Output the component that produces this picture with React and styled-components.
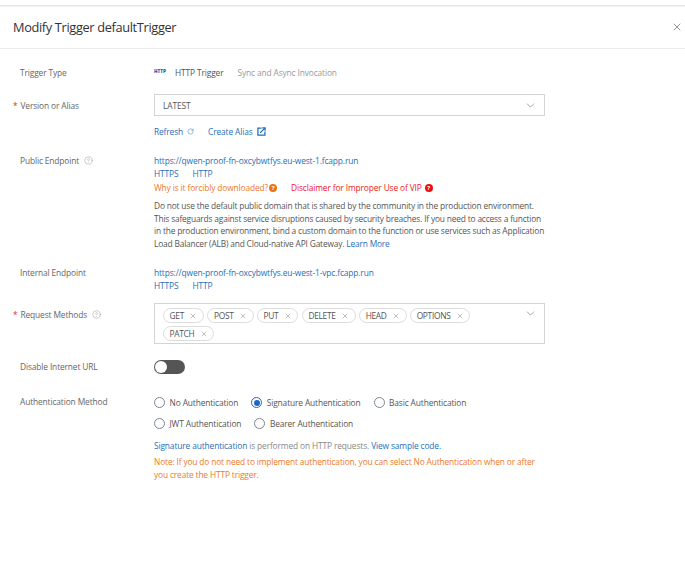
import React from "react";
import styled, { createGlobalStyle } from "styled-components";
import { X, ChevronDown, RotateCw, CircleHelp } from "lucide-react";

const Global = createGlobalStyle`
  html, body { margin: 0; padding: 0; background: #fff; }
  body { font-family: "Open Sans", "Noto Sans", sans-serif; font-size: 8.4px; letter-spacing: -0.13px; color: #555; }
`;

const Page = styled.div`
  width: 685px;
  height: 573px;
  overflow: hidden;
  padding-top: 5px;
  box-sizing: border-box;
`;

const Header = styled.header`
  height: 42px;
  border-top: 1px solid #e6e6e6;
  border-bottom: 1px solid #ececec;
  display: flex;
  align-items: center;
  justify-content: space-between;
  padding: 0 2px 0 13px;
  box-shadow: inset 0 1px 1px #f4f4f4;
`;

const Title = styled.h1`
  margin: 0;
  font-size: 12.8px;
  letter-spacing: -0.35px;
  font-weight: 400;
  color: #333;
`;

const Close = styled(X)`
  width: 12px;
  height: 12px;
  color: #666;
  stroke-width: 1.4;
`;

const Form = styled.div`
  padding: 17px 0 0 20px;
`;

const Row = styled.div`
  display: grid;
  grid-template-columns: 134px 391px;
  margin-top: ${p => p.$top || 0}px;
`;

const Label = styled.div`
  line-height: 13px;
  color: #666;
  display: flex;
  align-items: center;
  gap: 5px;
  height: 13px;
  margin-top: ${p => p.$offset || 0}px;
`;

const Star = styled.span`
  color: #e0301e;
  margin-left: -7px;
  margin-right: -2px;
`;

const Lines = styled.div`
  line-height: 13.4px;
  white-space: nowrap;
`;

const Link = styled.a`
  color: #1f6fb8;
  margin-right: ${p => p.$gap || 0}px;
`;

const TypeLine = styled.div`
  display: flex;
  align-items: center;
  line-height: 13px;
  color: #555;
`;

const HttpMark = styled.span`
  font-size: 4.6px;
  font-weight: 800;
  letter-spacing: 0;
  color: #1b5fc0;
  width: 21px;
  margin-top: -3px;
`;

const Muted = styled.span`
  color: #999;
  margin-left: 14px;
`;

const SelectBox = styled.div`
  height: 22px;
  box-sizing: border-box;
  border: 1px solid #d4d4d4;
  display: flex;
  align-items: center;
  justify-content: space-between;
  padding: 1px 7px 0 8px;
  color: #555;
`;

const Chevron = styled(ChevronDown)`
  width: 13px;
  height: 13px;
  color: #888;
  stroke-width: 1.4;
`;

const LinkRow = styled.div`
  display: flex;
  align-items: center;
  line-height: 13px;
  color: #1f6fb8;
`;

const RefreshIcon = styled(RotateCw)`
  width: 7px;
  height: 7px;
  stroke-width: 1.5;
  margin: 0 14px 0 4px;
`;

const Warn = styled.span`
  color: ${p => p.$color};
  margin-right: ${p => p.$gap || 0}px;
  display: inline-flex;
  align-items: center;
  gap: ${p => p.$iconGap ?? 1}px;
`;

const Badge = styled.span`
  width: 8px;
  height: 8px;
  border-radius: 50%;
  background: ${p => p.$color};
  color: #fff;
  font-size: 6px;
  font-weight: 700;
  line-height: 8px;
  text-align: center;
`;

const Paragraph = styled.p`
  margin: 5.6px 0 0;
  line-height: 12.7px;
  letter-spacing: -0.18px;
  color: #555;
  width: 393px;
`;

const TagBox = styled.div`
  height: 41px;
  box-sizing: border-box;
  border: 1px solid #d4d4d4;
  padding: 4px 26px 0 8px;
  display: flex;
  flex-wrap: wrap;
  align-content: flex-start;
  gap: 3px 3.5px;
  position: relative;
`;

const Tag = styled.span`
  height: 15px;
  box-sizing: border-box;
  border: 1px solid #dcdcdc;
  border-radius: 8px;
  padding: 0 5.5px;
  display: inline-flex;
  align-items: center;
  gap: 5.5px;
  letter-spacing: -0.3px;
  color: #555;
`;

const TagClose = styled(X)`
  width: 8px;
  height: 8px;
  color: #777;
  stroke-width: 1.4;
`;

const TagChevron = styled(Chevron)`
  position: absolute;
  top: 3px;
  right: 7px;
`;

const Toggle = styled.div`
  width: 31px;
  height: 14px;
  border-radius: 7px;
  background: #555;
  position: relative;
  &::after {
    content: "";
    position: absolute;
    left: 1px;
    top: 1px;
    width: 12px;
    height: 12px;
    border-radius: 50%;
    background: #fff;
  }
`;

const RadioRow = styled.div`
  display: flex;
  align-items: center;
  height: 13px;
  margin-bottom: ${p => p.$bottom || 0}px;
  margin-top: ${p => p.$top || 0}px;
`;

const RadioItem = styled.span`
  display: inline-flex;
  align-items: center;
  gap: 4.5px;
  margin-right: 13px;
  color: #555;
`;

const RadioDot = styled.span`
  width: 11px;
  height: 11px;
  box-sizing: border-box;
  border-radius: 50%;
  border: 1px solid ${p => (p.$on ? "#1a66c9" : "#7a8794")};
  display: inline-flex;
  align-items: center;
  justify-content: center;
  &::after {
    content: "";
    width: 6px;
    height: 6px;
    border-radius: 50%;
    background: ${p => (p.$on ? "#1a66c9" : "transparent")};
  }
`;

const Info = styled.div`
  margin-top: 9px;
  line-height: 13px;
  color: #888;
`;

const Note = styled.div`
  margin-top: 3px;
  line-height: 13px;
  letter-spacing: -0.15px;
  color: #ee7a2c;
  width: 385px;
`;

const methods = ["GET", "POST", "PUT", "DELETE", "HEAD", "OPTIONS", "PATCH"];

const Radio = ({ on, children }) => (
  <RadioItem>
    <RadioDot $on={on} />
    {children}
  </RadioItem>
);

const ExternalMark = () => (
  <svg width="9" height="9" viewBox="0 0 10 10" fill="none" stroke="#1f6fb8" strokeWidth="1.4" style={{ marginLeft: 4 }}>
    <path d="M5 1.2H1v7.8h7.800V5" />
    <path d="M3.500 6.500 8.800 1.200M5.800 1h3.200v3.200" />
  </svg>
);

export default function App() {
  return (
    <Page>
      <Global />
      <Header>
        <Title>Modify Trigger defaultTrigger</Title>
        <Close />
      </Header>
      <Form>
        <Row>
          <Label>Trigger Type</Label>
          <TypeLine>
            <HttpMark>HTTP</HttpMark>
            HTTP Trigger
            <Muted>Sync and Async Invocation</Muted>
          </TypeLine>
        </Row>
        <Row $top={15}>
          <Label $offset={5}><Star>*</Star>Version or Alias</Label>
          <SelectBox>
            LATEST
            <Chevron />
          </SelectBox>
        </Row>
        <Row $top={9}>
          <span />
          <LinkRow>
            Refresh
            <RefreshIcon />
            Create Alias
            <ExternalMark />
          </LinkRow>
        </Row>
        <Row $top={16}>
          <Label>
            Public Endpoint
            <CircleHelp size={9} color="#999" strokeWidth={1.3} />
          </Label>
          <div>
            <Lines>
              <Link>https://qwen-proof-fn-oxcybwtfys.eu-west-1.fcapp.run</Link>
              <br />
              <Link $gap={14}>HTTPS</Link>
              <Link>HTTP</Link>
              <br />
              <Warn $color="#ee7a2c" $gap={14}>
                Why is it forcibly downloaded?
                <Badge $color="#e8731a">?</Badge>
              </Warn>
              <Warn $color="#e81c24" $iconGap={3}>
                Disclaimer for Improper Use of VIP
                <Badge $color="#e81010">?</Badge>
              </Warn>
            </Lines>
            <Paragraph>
              Do not use the default public domain that is shared by the community in the production environment.
              This safeguards against service disruptions caused by security breaches. If you need to access a function
              in the production environment, bind a custom domain to the function or use services such as Application
              Load Balancer (ALB) and Cloud-native API Gateway. <Link>Learn More</Link>
            </Paragraph>
          </div>
        </Row>
        <Row $top={15}>
          <Label>Internal Endpoint</Label>
          <Lines>
            <Link>https://qwen-proof-fn-oxcybwtfys.eu-west-1-vpc.fcapp.run</Link>
            <br />
            <Link $gap={14}>HTTPS</Link>
            <Link>HTTP</Link>
          </Lines>
        </Row>
        <Row $top={11}>
          <Label $offset={5}>
            <Star>*</Star>Request Methods
            <CircleHelp size={9} color="#999" strokeWidth={1.3} />
          </Label>
          <TagBox>
            {methods.map(m => (
              <Tag key={m}>
                {m}
                <TagClose />
              </Tag>
            ))}
            <TagChevron />
          </TagBox>
        </Row>
        <Row $top={16}>
          <Label>Disable Internet URL</Label>
          <Toggle />
        </Row>
        <Row $top={21}>
          <Label>Authentication Method</Label>
          <div>
            <RadioRow $top={1} $bottom={8}>
              <Radio>No Authentication</Radio>
              <Radio on>Signature Authentication</Radio>
              <Radio>Basic Authentication</Radio>
            </RadioRow>
            <RadioRow>
              <Radio>JWT Authentication</Radio>
              <Radio>Bearer Authentication</Radio>
            </RadioRow>
            <Info>
              <Link>Signature authentication</Link> is performed on HTTP requests. <Link>View sample code.</Link>
            </Info>
            <Note>
              Note: If you do not need to implement authentication, you can select No Authentication when or after you
              create the HTTP trigger.
            </Note>
          </div>
        </Row>
      </Form>
    </Page>
  );
}
